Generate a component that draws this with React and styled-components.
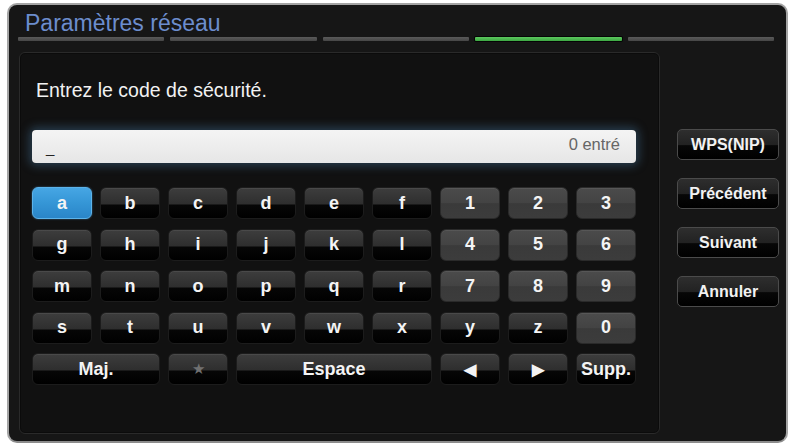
import React from 'react'
import styled, { createGlobalStyle, css } from 'styled-components'

const GlobalStyle = createGlobalStyle`
  html, body {
    margin: 0;
    padding: 0;
    background: #ffffff;
  }
  body {
    font-family: "Liberation Sans", Arial, sans-serif;
  }
`

const Frame = styled.div`
  box-sizing: border-box;
  margin: 3px 0 0 7px;
  width: 781px;
  height: 440px;
  border: 2px solid #a4a4a4;
  border-bottom-color: #8c8c8c;
  border-radius: 10px;
  background: #161616;
  display: flex;
  flex-direction: column;
  overflow: hidden;
`

const Title = styled.h1`
  margin: 0;
  padding: 5px 0 0 16px;
  font-size: 23px;
  line-height: 26px;
  font-weight: normal;
  color: #6c8dcd;
`

const Steps = styled.div`
  display: flex;
  gap: 6px;
  margin: 1px 12px 0 9px;
  height: 4px;
`

const Step = styled.div`
  flex: 1;
  border-radius: 1px;
  background: linear-gradient(to bottom, #5a5a5a, #464646);
  ${({ active }) =>
    active &&
    css`
      background: linear-gradient(to bottom, #5cc85e, #3da743);
      box-shadow: 0 0 0 1px #050505;
    `}
`

const Body = styled.div`
  display: flex;
  margin: 11px 0 0 10px;
`

const Panel = styled.section`
  box-sizing: border-box;
  width: 641px;
  height: 382px;
  border: 1px solid #2a2a2a;
  border-radius: 6px;
  background: #111111;
  padding: 26px 0 0 16px;
  box-shadow: inset 0 0 0 1px #0b0b0b;
`

const Prompt = styled.div`
  font-size: 19.5px;
  line-height: 23px;
  color: #f2f2f2;
`

const Field = styled.div`
  box-sizing: border-box;
  margin: 28px 0 0 -4px;
  width: 604px;
  height: 33px;
  border-radius: 4px;
  background: linear-gradient(to bottom, #f4f4f4, #e6e6e6);
  box-shadow: 0 0 10px 3px rgba(80, 140, 190, 0.35);
  display: flex;
  align-items: flex-end;
  justify-content: space-between;
  padding: 0 16px 7px 14px;
  font-size: 15px;
  color: #222;
`

const Count = styled.span`
  align-self: center;
  color: #666666;
  font-size: 16.5px;
  padding-top: 2px;
`

const Keyboard = styled.div`
  display: grid;
  grid-template-columns: repeat(9, 60px);
  grid-auto-rows: 32px;
  column-gap: 8px;
  row-gap: 9.5px;
  margin: 24px 0 0 -4px;
`

const Key = styled.button`
  box-sizing: border-box;
  grid-column: span ${({ span }) => span || 1};
  border: 1px solid #1c1c1c;
  border-radius: 6px;
  padding: 0;
  font-family: "Liberation Sans", Arial, sans-serif;
  font-size: 18px;
  font-weight: bold;
  color: #f4f4f4;
  background: linear-gradient(
    to bottom,
    #3d3d3d 0%,
    #2e2e2e 54%,
    #060606 56%,
    #000000 100%
  );
  box-shadow: inset 0 1px 0 rgba(255, 255, 255, 0.07);
  display: flex;
  align-items: center;
  justify-content: center;

  ${({ variant }) =>
    variant === 'number' &&
    css`
      background: linear-gradient(
        to bottom,
        #4b4b4b 0%,
        #434343 50%,
        #3a3a3a 52%,
        #3c3c3c 100%
      );
      border-color: #2a2a2a;
    `}

  ${({ variant }) =>
    variant === 'selected' &&
    css`
      background: linear-gradient(to bottom, #46a6e4 0%, #3596d6 50%, #2a85c8 100%);
      border-color: #5cb3ea;
      box-shadow: 0 0 2px rgba(90, 170, 230, 0.6);
    `}
`

const Star = styled.span`
  color: #717171;
  font-size: 15px;
  font-weight: normal;
`

const Arrow = styled.span`
  font-size: 16px;
`

const Side = styled.aside`
  display: flex;
  flex-direction: column;
  gap: 18px;
  margin-left: 17px;
  padding-top: 77px;
`

const SideButton = styled.button`
  box-sizing: border-box;
  width: 102px;
  height: 31px;
  border: 1px solid #4b4b4b;
  border-radius: 5px;
  padding: 0;
  font-family: "Liberation Sans", Arial, sans-serif;
  font-size: 16px;
  font-weight: bold;
  color: #f2f2f2;
  background: linear-gradient(
    to bottom,
    #2e2e2e 0%,
    #222222 50%,
    #070707 54%,
    #000000 100%
  );
`

const rows = [
  ['a', 'b', 'c', 'd', 'e', 'f', '1', '2', '3'],
  ['g', 'h', 'i', 'j', 'k', 'l', '4', '5', '6'],
  ['m', 'n', 'o', 'p', 'q', 'r', '7', '8', '9'],
  ['s', 't', 'u', 'v', 'w', 'x', 'y', 'z', '0'],
]

const variantFor = (k) => {
  if (k === 'a') return 'selected'
  if (/[0-9]/.test(k)) return 'number'
  return 'letter'
}

export default function App () {
  return (
    <>
      <GlobalStyle />
      <Frame>
        <Title>Paramètres réseau</Title>
        <Steps>
          <Step />
          <Step />
          <Step />
          <Step active />
          <Step />
        </Steps>
        <Body>
          <Panel>
            <Prompt>Entrez le code de sécurité.</Prompt>
            <Field>
              <span>_</span>
              <Count>0 entré</Count>
            </Field>
            <Keyboard>
              {rows.flat().map((k) => (
                <Key key={k} variant={variantFor(k)}>{k}</Key>
              ))}
              <Key span={2}>Maj.</Key>
              <Key><Star>★</Star></Key>
              <Key span={3}>Espace</Key>
              <Key><Arrow>◀</Arrow></Key>
              <Key><Arrow>▶</Arrow></Key>
              <Key>Supp.</Key>
            </Keyboard>
          </Panel>
          <Side>
            <SideButton>WPS(NIP)</SideButton>
            <SideButton>Précédent</SideButton>
            <SideButton>Suivant</SideButton>
            <SideButton>Annuler</SideButton>
          </Side>
        </Body>
      </Frame>
    </>
  )
}
